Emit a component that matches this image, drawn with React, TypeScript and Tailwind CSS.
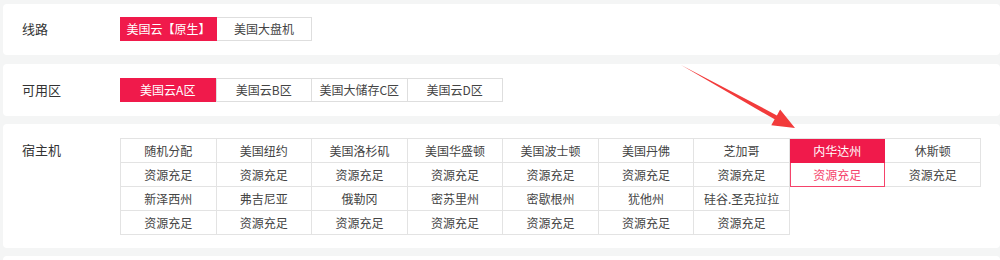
import { Fragment } from "react";

const FONT = "font-['Microsoft_YaHei','Noto_Sans_CJK_SC',sans-serif]";

const zones = ["美国云A区", "美国云B区", "美国大储存C区", "美国云D区"];

const hosts = [
  "随机分配",
  "美国纽约",
  "美国洛杉矶",
  "美国华盛顿",
  "美国波士顿",
  "美国丹佛",
  "芝加哥",
  "内华达州",
  "休斯顿",
  "新泽西州",
  "弗吉尼亚",
  "俄勒冈",
  "密苏里州",
  "密歇根州",
  "犹他州",
  "硅谷.圣克拉拉",
];

function Panel({ label, className, children }: { label: string; className: string; children: React.ReactNode }) {
  return (
    <section className={`ml-[3px] flex rounded bg-white pl-[19px] ${className}`}>
      <div className="w-[98px] shrink-0 text-[13px] leading-6 text-[#333]">{label}</div>
      <div>{children}</div>
    </section>
  );
}

function Arrow() {
  return (
    <svg className="pointer-events-none absolute left-0 top-0" width="1000" height="260" viewBox="0 0 1000 260">
      <polygon
        points="681,65 776.9,115.4 780.1,109.4 795,128 771.3,125.2 774.6,119.3"
        fill="#f23b3b"
      />
    </svg>
  );
}

export default function App() {
  return (
    <div className={`relative h-[260px] w-[1000px] overflow-hidden bg-[#f4f5f5] pt-1 text-xs ${FONT}`}>
      <Panel label="线路" className="h-[51px] pt-[13px]">
        <div className="flex">
          <button className="h-6 w-[97px] bg-[#f01a4b] text-xs text-white">美国云【原生】</button>
          <button className="h-6 w-[95px] border border-l-0 border-[#dedede] text-xs text-[#444]">美国大盘机</button>
        </div>
      </Panel>

      <Panel label="可用区" className="mt-[9px] h-[52px] pt-[14px]">
        <div className="grid w-[383px] grid-cols-4 border-y border-r border-[#dedede]">
          {zones.map((z, i) => (
            <button
              key={z}
              className={
                i === 0
                  ? "-my-px h-6 bg-[#f01a4b] text-xs text-white"
                  : "h-[22px] border-l border-[#dedede] text-xs text-[#444]"
              }
            >
              {z}
            </button>
          ))}
        </div>
      </Panel>

      <Panel label="宿主机" className="mt-2 h-[124px] pt-[14px]">
        <div className="grid w-[861px] grid-cols-9 border-l border-t border-[#e3e3e3] text-[#444]">
          {hosts.map((h) => {
            const active = h === "内华达州";
            return (
              <Fragment key={h}>
                <div className="flex flex-col">
                  <div
                    className={
                      active
                        ? "flex h-6 items-center justify-center border-b border-r border-[#f01a4b] bg-[#f01a4b] text-white"
                        : "flex h-6 items-center justify-center border-b border-r border-[#e3e3e3]"
                    }
                  >
                    {h}
                  </div>
                  <div
                    className={
                      active
                        ? "flex h-6 items-center justify-center border-b border-r border-[#f5436b] text-[#f5436b] shadow-[inset_1px_0_0_#f5436b]"
                        : "flex h-6 items-center justify-center border-b border-r border-[#e3e3e3]"
                    }
                  >
                    资源充足
                  </div>
                </div>
              </Fragment>
            );
          })}
        </div>
      </Panel>

      <section className="ml-[3px] mt-2 h-8 rounded bg-white" />

      <Arrow />
    </div>
  );
}
